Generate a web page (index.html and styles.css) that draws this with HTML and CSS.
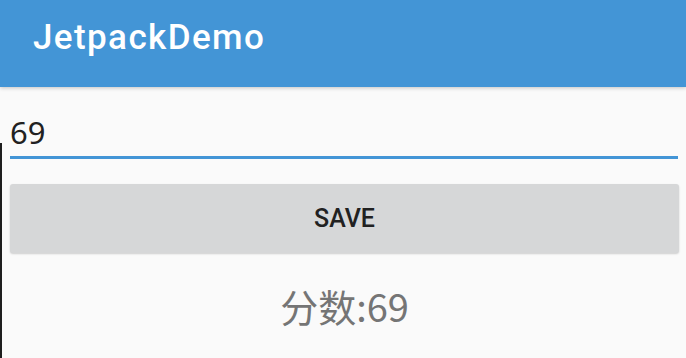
FILE: index.html
```html
<!DOCTYPE html>
<html lang="zh">
<head>
<meta charset="utf-8">
<title>JetpackDemo</title>
<link rel="stylesheet" href="styles.css">
</head>
<body>
<div class="app">
  <header class="appbar"><span class="title">JetpackDemo</span></header>
  <main class="content">
    <div class="field"><span class="field-value">69</span></div>
    <button class="btn" type="button">SAVE</button>
    <div class="score">分数:69</div>
  </main>
  <div class="edge"></div>
</div>
</body>
</html>
```
FILE: styles.css
```css
html, body {
  margin: 0;
  padding: 0;
  background: #fafafa;
}
.app {
  position: relative;
  width: 686px;
  height: 358px;
  overflow: hidden;
  display: flex;
  flex-direction: column;
  font-family: Roboto, "Noto Sans", "Noto Sans CJK SC", sans-serif;
}
.appbar {
  height: 87px;
  flex: none;
  background: #4395d6;
  display: flex;
  align-items: center;
  padding-left: 33px;
  padding-bottom: 12px;
  box-sizing: border-box;
  box-shadow: 0 1px 4px rgba(0,0,0,0.22);
  position: relative;
  z-index: 1;
}
.title {
  color: #fff;
  font-family: Roboto, sans-serif;
  font-weight: 500;
  font-size: 35px;
  letter-spacing: 1.4px;
  line-height: 1;
}
.content {
  display: flex;
  flex-direction: column;
  padding: 0 7px 0 10px;
}
.field {
  height: 72px;
  box-sizing: border-box;
  border-bottom: 3px solid #4395d6;
  display: flex;
  align-items: flex-end;
  padding-bottom: 8px;
  margin-right: 1px;
}
.field-value {
  font-family: "Noto Sans", sans-serif;
  font-size: 31px;
  color: #212121;
  line-height: 1;
}
.btn {
  margin-top: 25px;
  height: 69px;
  border: none;
  border-radius: 3px;
  background: #d6d7d8;
  box-shadow: 0 1px 2px rgba(0,0,0,0.18);
  font-family: Roboto, sans-serif;
  font-weight: 500;
  font-size: 25px;
  color: #212121;
  padding: 0;
}
.score {
  margin-top: 28px;
  text-align: center;
  font-family: "Noto Sans CJK SC", sans-serif;
  font-size: 38px;
  color: #757575;
  line-height: 1.3;
}
.edge {
  position: absolute;
  left: 0;
  top: 143px;
  bottom: 0;
  width: 2px;
  background: #1e1e1e;
}
```
